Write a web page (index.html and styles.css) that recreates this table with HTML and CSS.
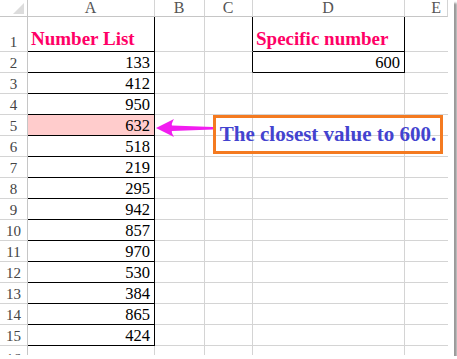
FILE: index.html
```html
<!DOCTYPE html>
<html lang="en">
<head>
    <meta charset="UTF-8">
    <title>Closest value</title>
    <link rel="stylesheet" href="styles.css">
</head>
<body>

    <div class="sheet">
        <div class="row head">
            <div class="c rh corner"><span class="tri"></span></div>
            <div class="c hd">A</div>
            <div class="c hd">B</div>
            <div class="c hd">C</div>
            <div class="c hd">D</div>
            <div class="c hd e-hd">E</div>
        </div>
        <div class="row r1">
            <div class="c rh">1</div>
            <div class="c a title">Number List</div>
            <div class="c"></div>
            <div class="c edge"></div>
            <div class="c box title">Specific number</div>
            <div class="c e"></div>
        </div>
        <div class="row">
            <div class="c rh">2</div>
            <div class="c a num">133</div>
            <div class="c"></div>
            <div class="c edge"></div>
            <div class="c box num">600</div>
            <div class="c e"></div>
        </div>
        <div class="row"><div class="c rh">3</div><div class="c a num">412</div><div class="c"></div><div class="c"></div><div class="c"></div><div class="c e"></div></div>
        <div class="row"><div class="c rh">4</div><div class="c a num">950</div><div class="c"></div><div class="c"></div><div class="c"></div><div class="c e"></div></div>
        <div class="row"><div class="c rh">5</div><div class="c a num hit">632</div><div class="c"></div><div class="c"></div><div class="c"></div><div class="c e"></div></div>
        <div class="row"><div class="c rh">6</div><div class="c a num">518</div><div class="c"></div><div class="c"></div><div class="c"></div><div class="c e"></div></div>
        <div class="row"><div class="c rh">7</div><div class="c a num">219</div><div class="c"></div><div class="c"></div><div class="c"></div><div class="c e"></div></div>
        <div class="row"><div class="c rh">8</div><div class="c a num">295</div><div class="c"></div><div class="c"></div><div class="c"></div><div class="c e"></div></div>
        <div class="row"><div class="c rh">9</div><div class="c a num">942</div><div class="c"></div><div class="c"></div><div class="c"></div><div class="c e"></div></div>
        <div class="row"><div class="c rh">10</div><div class="c a num">857</div><div class="c"></div><div class="c"></div><div class="c"></div><div class="c e"></div></div>
        <div class="row"><div class="c rh">11</div><div class="c a num">970</div><div class="c"></div><div class="c"></div><div class="c"></div><div class="c e"></div></div>
        <div class="row"><div class="c rh">12</div><div class="c a num">530</div><div class="c"></div><div class="c"></div><div class="c"></div><div class="c e"></div></div>
        <div class="row"><div class="c rh">13</div><div class="c a num">384</div><div class="c"></div><div class="c"></div><div class="c"></div><div class="c e"></div></div>
        <div class="row"><div class="c rh">14</div><div class="c a num">865</div><div class="c"></div><div class="c"></div><div class="c"></div><div class="c e"></div></div>
        <div class="row"><div class="c rh">15</div><div class="c a num">424</div><div class="c"></div><div class="c"></div><div class="c"></div><div class="c e"></div></div>
        <div class="row cut"><div class="c rh"><span>16</span></div><div class="c"></div><div class="c"></div><div class="c"></div><div class="c"></div><div class="c e"></div></div>

        <svg class="arrow" width="60" height="22" viewBox="0 0 60 22">
            <path d="M1 11 L19 2 Q16 7 17 8.5 L58 10 L58 12.5 L17 14 Q16 15 19 20 Z" fill="#f21df0"/>
        </svg>
        <div class="note">The closest value to 600.</div>
    </div>

</body>
</html>
```

FILE: styles.css
```css
body {
    margin: 0;
    background: #ffffff;
    font-family: 'Liberation Serif', 'Times New Roman', serif;
}

.sheet {
    position: relative;
    width: 454px;
    height: 356px;
    background: #ffffff;
    box-shadow: 3px 3px 2px #9a9a9a;
    overflow: hidden;
}

.row {
    display: grid;
    grid-template-columns: 28px 127px 50px 48px 152px 43px;
    height: 21px;
}

.row.head {
    height: 17px;
}

.row.r1 {
    height: 35px;
}

.row.cut {
    height: 9px;
}

.c {
    box-sizing: border-box;
    border-right: 1px solid #d4d4d4;
    border-bottom: 1px solid #d4d4d4;
    display: flex;
    align-items: flex-end;
    padding: 0 4px 0 3px;
    font-size: 16.5px;
    line-height: 18px;
    color: #000000;
    overflow: hidden;
}

.c.e {
    border-right: none;
}

.cut .c {
    border-bottom: none;
}

/* header row and row numbers */
.hd {
    justify-content: center;
    align-items: center;
    font-size: 16px;
    line-height: 16px;
    color: #555555;
    border-bottom-color: #c6c6c6;
}

.hd.e-hd {
    justify-content: flex-end;
    padding-right: 6px;
}

.rh {
    justify-content: center;
    padding: 0;
    font-size: 15px;
    line-height: 18px;
    color: #444444;
    border-right-color: #c6c6c6;
}

.cut .rh span {
    margin-top: 4px;
    align-self: flex-start;
}

.corner {
    justify-content: flex-end;
    padding: 0 3px 2px 0;
    border-bottom-color: #c6c6c6;
}

.tri {
    width: 0;
    height: 0;
    border-left: 11px solid transparent;
    border-bottom: 11px solid #dcdcdc;
}

/* bordered data cells */
.a {
    border-right-color: #000000;
    border-bottom-color: #000000;
}

.edge {
    border-right-color: #000000;
}

.box {
    border-right-color: #000000;
    border-bottom-color: #000000;
}

.num {
    justify-content: flex-end;
}

.title {
    font-weight: bold;
    font-size: 19px;
    line-height: 22px;
    color: #ff0066;
    padding-left: 3px;
    padding-bottom: 1px;
    white-space: nowrap;
}

.hit {
    background: #ffcccc;
}

.arrow {
    position: absolute;
    left: 155px;
    top: 117px;
}

.note {
    position: absolute;
    left: 213px;
    top: 115px;
    width: 230px;
    height: 39px;
    box-sizing: border-box;
    border: 3px solid #f47a20;
    display: flex;
    align-items: center;
    justify-content: center;
    font-weight: bold;
    font-size: 21px;
    color: #4343cf;
    white-space: nowrap;
}
```
